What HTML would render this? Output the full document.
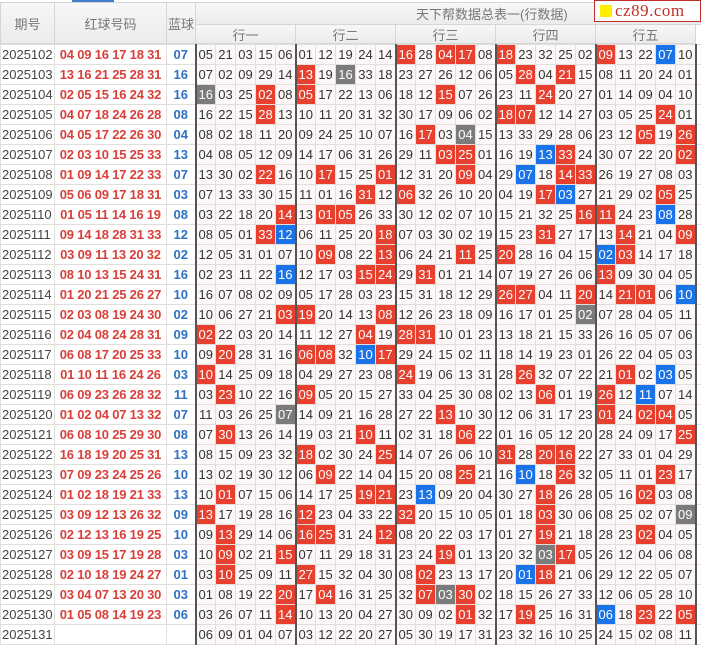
<!DOCTYPE html>
<html><head><meta charset="utf-8">
<style>
*{margin:0;padding:0;box-sizing:border-box}
body{width:701px;height:644px;overflow:hidden;background:#fff;font-family:"Liberation Sans","Noto Sans CJK SC",sans-serif;position:relative}
.hd{position:absolute;background:linear-gradient(#f7f7f7,#ececec);border:1px solid #d6d6d6;color:#777;font-size:13px;display:flex;align-items:center;justify-content:center;font-family:"Liberation Sans","Noto Sans CJK SC",sans-serif}
table{position:absolute;left:0;top:44px;border-collapse:collapse;table-layout:fixed;width:701px}
td{height:20px;border:1px solid #e2dede;font-size:13px;color:#333;text-align:center;padding:0;white-space:nowrap;overflow:hidden;background:#fcf8f7;line-height:18px}
td:nth-child(1){text-align:left;background:#fff;color:#444;font-size:13px;padding-left:1px}
td:nth-child(2){background:#fff;color:#d9403a;font-weight:bold;font-size:13px;letter-spacing:-0.2px}
td:nth-child(3){background:#fff;color:#2f72c4;font-weight:bold;font-size:13px}
td:nth-child(5n+4){border-left:2px solid #555}
td.r{background:#e8402f;color:#fff}
td.b{background:#1a73e8;color:#fff}
td.g{background:#7b7b7b;color:#fff}
td.x{background:#fff}
</style></head><body>
<div style="position:absolute;left:72px;top:0;width:42px;height:2px;background:#3d7cc9"></div>
<div class="hd" style="left:0;top:2px;width:55px;height:42px">期号</div>
<div class="hd" style="left:54px;top:2px;width:113px;height:42px">红球号码</div>
<div class="hd" style="left:166px;top:2px;width:30px;height:42px">蓝球</div>
<div class="hd" style="left:195px;top:2px;width:506px;height:23px;justify-content:flex-start;padding-left:220px;font-size:13px">天下帮数据总表一(行数据)</div>
<div class="hd" style="left:195px;top:24px;width:101px;height:20px">行一</div>
<div class="hd" style="left:295px;top:24px;width:101px;height:20px">行二</div>
<div class="hd" style="left:395px;top:24px;width:101px;height:20px">行三</div>
<div class="hd" style="left:495px;top:24px;width:101px;height:20px">行四</div>
<div class="hd" style="left:595px;top:24px;width:101px;height:20px">行五</div>
<div style="position:absolute;left:594px;top:0;width:107px;height:22px;background:#fff;border:1px solid #c0302a;display:flex;align-items:center;padding-left:5px">
<div style="width:12px;height:12px;background:#ffee00;margin-right:3px"></div>
<span style="font-family:'Liberation Serif',serif;font-size:17px;color:#c0302a;letter-spacing:0.5px">cz89.com</span></div>
<table>
<colgroup><col style="width:54px"><col style="width:112px"><col style="width:29px"><col span="25" style="width:20px"><col style="width:6px"></colgroup>
<tr><td>2025102</td><td>04 09 16 17 18 31</td><td>07</td><td>05</td><td>21</td><td>03</td><td>15</td><td>06</td><td>01</td><td>12</td><td>19</td><td>24</td><td>14</td><td class=r>16</td><td>28</td><td class=r>04</td><td class=r>17</td><td>08</td><td class=r>18</td><td>23</td><td>32</td><td>25</td><td>02</td><td class=r>09</td><td>13</td><td>22</td><td class=b>07</td><td>10</td><td class=x></td></tr>
<tr><td>2025103</td><td>13 16 21 25 28 31</td><td>16</td><td>07</td><td>02</td><td>09</td><td>29</td><td>14</td><td class=r>13</td><td>19</td><td class=g>16</td><td>33</td><td>18</td><td>23</td><td>27</td><td>26</td><td>12</td><td>06</td><td>05</td><td class=r>28</td><td>04</td><td class=r>21</td><td>15</td><td>08</td><td>11</td><td>20</td><td>24</td><td>01</td><td class=x></td></tr>
<tr><td>2025104</td><td>02 05 15 16 24 32</td><td>16</td><td class=g>16</td><td>03</td><td>25</td><td class=r>02</td><td>08</td><td class=r>05</td><td>17</td><td>22</td><td>13</td><td>06</td><td>18</td><td>12</td><td class=r>15</td><td>07</td><td>26</td><td>23</td><td>11</td><td class=r>24</td><td>20</td><td>27</td><td>01</td><td>14</td><td>09</td><td>04</td><td>10</td><td class=x></td></tr>
<tr><td>2025105</td><td>04 07 18 24 26 28</td><td>08</td><td>16</td><td>22</td><td>15</td><td class=r>28</td><td>13</td><td>10</td><td>11</td><td>20</td><td>31</td><td>32</td><td>30</td><td>17</td><td>09</td><td>06</td><td>02</td><td class=r>18</td><td class=r>07</td><td>12</td><td>14</td><td>27</td><td>03</td><td>05</td><td>25</td><td class=r>24</td><td>01</td><td class=x></td></tr>
<tr><td>2025106</td><td>04 05 17 22 26 30</td><td>04</td><td>08</td><td>02</td><td>18</td><td>11</td><td>20</td><td>09</td><td>24</td><td>25</td><td>10</td><td>07</td><td>16</td><td class=r>17</td><td>03</td><td class=g>04</td><td>15</td><td>13</td><td>33</td><td>29</td><td>28</td><td>06</td><td>23</td><td>12</td><td class=r>05</td><td>19</td><td class=r>26</td><td class=x></td></tr>
<tr><td>2025107</td><td>02 03 10 15 25 33</td><td>13</td><td>04</td><td>08</td><td>05</td><td>12</td><td>09</td><td>14</td><td>17</td><td>06</td><td>31</td><td>26</td><td>29</td><td>11</td><td class=r>03</td><td class=r>25</td><td>01</td><td>16</td><td>19</td><td class=b>13</td><td class=r>33</td><td>24</td><td>30</td><td>07</td><td>22</td><td>20</td><td class=r>02</td><td class=x></td></tr>
<tr><td>2025108</td><td>01 09 14 17 22 33</td><td>07</td><td>13</td><td>30</td><td>02</td><td class=r>22</td><td>16</td><td>10</td><td class=r>17</td><td>15</td><td>25</td><td class=r>01</td><td>12</td><td>31</td><td>20</td><td class=r>09</td><td>04</td><td>29</td><td class=b>07</td><td>18</td><td class=r>14</td><td class=r>33</td><td>26</td><td>19</td><td>27</td><td>08</td><td>03</td><td class=x></td></tr>
<tr><td>2025109</td><td>05 06 09 17 18 31</td><td>03</td><td>07</td><td>13</td><td>33</td><td>30</td><td>15</td><td>11</td><td>01</td><td>16</td><td class=r>31</td><td>12</td><td class=r>06</td><td>32</td><td>26</td><td>10</td><td>20</td><td>04</td><td>19</td><td class=r>17</td><td class=b>03</td><td>27</td><td>21</td><td>29</td><td>02</td><td class=r>05</td><td>25</td><td class=x></td></tr>
<tr><td>2025110</td><td>01 05 11 14 16 19</td><td>08</td><td>03</td><td>22</td><td>18</td><td>20</td><td class=r>14</td><td>13</td><td class=r>01</td><td class=r>05</td><td>26</td><td>33</td><td>30</td><td>12</td><td>02</td><td>07</td><td>10</td><td>15</td><td>21</td><td>32</td><td>25</td><td class=r>16</td><td class=r>11</td><td>24</td><td>23</td><td class=b>08</td><td>28</td><td class=x></td></tr>
<tr><td>2025111</td><td>09 14 18 28 31 33</td><td>12</td><td>08</td><td>05</td><td>01</td><td class=r>33</td><td class=b>12</td><td>06</td><td>11</td><td>25</td><td>20</td><td class=r>18</td><td>07</td><td>03</td><td>30</td><td>02</td><td>19</td><td>15</td><td>23</td><td class=r>31</td><td>27</td><td>17</td><td>13</td><td class=r>14</td><td>21</td><td>04</td><td class=r>09</td><td class=x></td></tr>
<tr><td>2025112</td><td>03 09 11 13 20 32</td><td>02</td><td>12</td><td>05</td><td>31</td><td>01</td><td>07</td><td>10</td><td class=r>09</td><td>08</td><td>22</td><td class=r>13</td><td>06</td><td>24</td><td>21</td><td class=r>11</td><td>25</td><td class=r>20</td><td>28</td><td>16</td><td>04</td><td>15</td><td class=b>02</td><td class=r>03</td><td>14</td><td>17</td><td>18</td><td class=x></td></tr>
<tr><td>2025113</td><td>08 10 13 15 24 31</td><td>16</td><td>02</td><td>23</td><td>11</td><td>22</td><td class=b>16</td><td>12</td><td>17</td><td>03</td><td class=r>15</td><td class=r>24</td><td>29</td><td class=r>31</td><td>01</td><td>21</td><td>14</td><td>07</td><td>19</td><td>27</td><td>26</td><td>06</td><td class=r>13</td><td>09</td><td>30</td><td>04</td><td>05</td><td class=x></td></tr>
<tr><td>2025114</td><td>01 20 21 25 26 27</td><td>10</td><td>16</td><td>07</td><td>08</td><td>02</td><td>09</td><td>05</td><td>17</td><td>28</td><td>03</td><td>23</td><td>15</td><td>31</td><td>18</td><td>12</td><td>29</td><td class=r>26</td><td class=r>27</td><td>04</td><td>11</td><td class=r>20</td><td>14</td><td class=r>21</td><td class=r>01</td><td>06</td><td class=b>10</td><td class=x></td></tr>
<tr><td>2025115</td><td>02 03 08 19 24 30</td><td>02</td><td>10</td><td>06</td><td>27</td><td>21</td><td class=r>03</td><td class=r>19</td><td>20</td><td>14</td><td>13</td><td class=r>08</td><td>12</td><td>26</td><td>23</td><td>18</td><td>09</td><td>16</td><td>17</td><td>01</td><td>25</td><td class=g>02</td><td>07</td><td>28</td><td>04</td><td>05</td><td>11</td><td class=x></td></tr>
<tr><td>2025116</td><td>02 04 08 24 28 31</td><td>09</td><td class=r>02</td><td>22</td><td>03</td><td>20</td><td>14</td><td>11</td><td>12</td><td>27</td><td class=r>04</td><td>19</td><td class=r>28</td><td class=r>31</td><td>10</td><td>01</td><td>23</td><td>13</td><td>18</td><td>21</td><td>15</td><td>33</td><td>26</td><td>16</td><td>05</td><td>07</td><td>06</td><td class=x></td></tr>
<tr><td>2025117</td><td>06 08 17 20 25 33</td><td>10</td><td>09</td><td class=r>20</td><td>28</td><td>31</td><td>16</td><td class=r>06</td><td class=r>08</td><td>32</td><td class=b>10</td><td class=r>17</td><td>29</td><td>24</td><td>15</td><td>02</td><td>11</td><td>18</td><td>14</td><td>19</td><td>23</td><td>01</td><td>26</td><td>22</td><td>04</td><td>05</td><td>03</td><td class=x></td></tr>
<tr><td>2025118</td><td>01 10 11 16 24 26</td><td>03</td><td class=r>10</td><td>14</td><td>25</td><td>09</td><td>18</td><td>04</td><td>29</td><td>27</td><td>23</td><td>08</td><td class=r>24</td><td>19</td><td>06</td><td>13</td><td>31</td><td>28</td><td class=r>26</td><td>32</td><td>07</td><td>22</td><td>21</td><td class=r>01</td><td>02</td><td class=b>03</td><td>05</td><td class=x></td></tr>
<tr><td>2025119</td><td>06 09 23 26 28 32</td><td>11</td><td>03</td><td class=r>23</td><td>10</td><td>22</td><td>16</td><td class=r>09</td><td>05</td><td>20</td><td>15</td><td>27</td><td>33</td><td>04</td><td>25</td><td>30</td><td>08</td><td>02</td><td>13</td><td class=r>06</td><td>01</td><td>19</td><td class=r>26</td><td>12</td><td class=b>11</td><td>07</td><td>14</td><td class=x></td></tr>
<tr><td>2025120</td><td>01 02 04 07 13 32</td><td>07</td><td>11</td><td>03</td><td>26</td><td>25</td><td class=g>07</td><td>14</td><td>09</td><td>21</td><td>16</td><td>28</td><td>27</td><td>22</td><td class=r>13</td><td>10</td><td>30</td><td>12</td><td>06</td><td>31</td><td>17</td><td>23</td><td class=r>01</td><td>24</td><td class=r>02</td><td class=r>04</td><td>05</td><td class=x></td></tr>
<tr><td>2025121</td><td>06 08 10 25 29 30</td><td>08</td><td>07</td><td class=r>30</td><td>13</td><td>26</td><td>14</td><td>19</td><td>03</td><td>21</td><td class=r>10</td><td>11</td><td>02</td><td>31</td><td>18</td><td class=r>06</td><td>22</td><td>01</td><td>16</td><td>05</td><td>12</td><td>20</td><td>28</td><td>24</td><td>09</td><td>17</td><td class=r>25</td><td class=x></td></tr>
<tr><td>2025122</td><td>16 18 19 20 25 31</td><td>13</td><td>08</td><td>15</td><td>09</td><td>23</td><td>32</td><td class=r>18</td><td>02</td><td>30</td><td>24</td><td class=r>25</td><td>14</td><td>07</td><td>26</td><td>06</td><td>10</td><td class=r>31</td><td>28</td><td class=r>20</td><td class=r>16</td><td>22</td><td>27</td><td>33</td><td>01</td><td>04</td><td>29</td><td class=x></td></tr>
<tr><td>2025123</td><td>07 09 23 24 25 26</td><td>10</td><td>13</td><td>02</td><td>19</td><td>30</td><td>12</td><td>06</td><td class=r>09</td><td>22</td><td>14</td><td>04</td><td>15</td><td>20</td><td>08</td><td class=r>25</td><td>21</td><td>16</td><td class=b>10</td><td>18</td><td class=r>26</td><td>32</td><td>05</td><td>11</td><td>01</td><td class=r>23</td><td>17</td><td class=x></td></tr>
<tr><td>2025124</td><td>01 02 18 19 21 33</td><td>13</td><td>10</td><td class=r>01</td><td>07</td><td>15</td><td>06</td><td>14</td><td>17</td><td>25</td><td class=r>19</td><td class=r>21</td><td>23</td><td class=b>13</td><td>09</td><td>20</td><td>04</td><td>30</td><td>27</td><td class=r>18</td><td>26</td><td>28</td><td>05</td><td>16</td><td class=r>02</td><td>03</td><td>08</td><td class=x></td></tr>
<tr><td>2025125</td><td>03 09 12 13 26 32</td><td>09</td><td class=r>13</td><td>17</td><td>19</td><td>28</td><td>16</td><td class=r>12</td><td>23</td><td>04</td><td>33</td><td>22</td><td class=r>32</td><td>20</td><td>15</td><td>10</td><td>05</td><td>01</td><td>18</td><td class=r>03</td><td>30</td><td>06</td><td>08</td><td>25</td><td>02</td><td>07</td><td class=g>09</td><td class=x></td></tr>
<tr><td>2025126</td><td>02 12 13 16 19 25</td><td>10</td><td>09</td><td class=r>13</td><td>29</td><td>14</td><td>06</td><td class=r>16</td><td class=r>25</td><td>31</td><td>24</td><td class=r>12</td><td>08</td><td>20</td><td>22</td><td>03</td><td>17</td><td>01</td><td>27</td><td class=r>19</td><td>21</td><td>18</td><td>28</td><td>23</td><td class=r>02</td><td>04</td><td>05</td><td class=x></td></tr>
<tr><td>2025127</td><td>03 09 15 17 19 28</td><td>03</td><td>10</td><td class=r>09</td><td>02</td><td>21</td><td class=r>15</td><td>07</td><td>11</td><td>29</td><td>18</td><td>31</td><td>23</td><td>24</td><td class=r>19</td><td>01</td><td>13</td><td>20</td><td>32</td><td class=g>03</td><td class=r>17</td><td>05</td><td>26</td><td>12</td><td>04</td><td>06</td><td>08</td><td class=x></td></tr>
<tr><td>2025128</td><td>02 10 18 19 24 27</td><td>01</td><td>03</td><td class=r>10</td><td>25</td><td>09</td><td>11</td><td class=r>27</td><td>15</td><td>32</td><td>04</td><td>30</td><td>08</td><td class=r>02</td><td>23</td><td>13</td><td>17</td><td>20</td><td class=b>01</td><td class=r>18</td><td>21</td><td>06</td><td>29</td><td>12</td><td>22</td><td>05</td><td>07</td><td class=x></td></tr>
<tr><td>2025129</td><td>03 04 07 13 20 30</td><td>03</td><td>01</td><td>08</td><td>19</td><td>22</td><td class=r>20</td><td>17</td><td class=r>04</td><td>16</td><td>31</td><td>25</td><td>32</td><td class=r>07</td><td class=g>03</td><td class=r>30</td><td>02</td><td>18</td><td>15</td><td>26</td><td>27</td><td>33</td><td>12</td><td>06</td><td>05</td><td>28</td><td>10</td><td class=x></td></tr>
<tr><td>2025130</td><td>01 05 08 14 19 23</td><td>06</td><td>03</td><td>26</td><td>07</td><td>11</td><td class=r>14</td><td>10</td><td>13</td><td>20</td><td>04</td><td>27</td><td>30</td><td>09</td><td>02</td><td class=r>01</td><td>32</td><td>17</td><td class=r>19</td><td>25</td><td>16</td><td>31</td><td class=b>06</td><td>18</td><td class=r>23</td><td>22</td><td class=r>05</td><td class=x></td></tr>
<tr><td>2025131</td><td></td><td></td><td>06</td><td>09</td><td>01</td><td>04</td><td>07</td><td>03</td><td>12</td><td>22</td><td>20</td><td>27</td><td>05</td><td>30</td><td>19</td><td>17</td><td>31</td><td>23</td><td>32</td><td>16</td><td>10</td><td>25</td><td>24</td><td>15</td><td>02</td><td>08</td><td>11</td><td class=x></td></tr>
</table>
</body></html>
